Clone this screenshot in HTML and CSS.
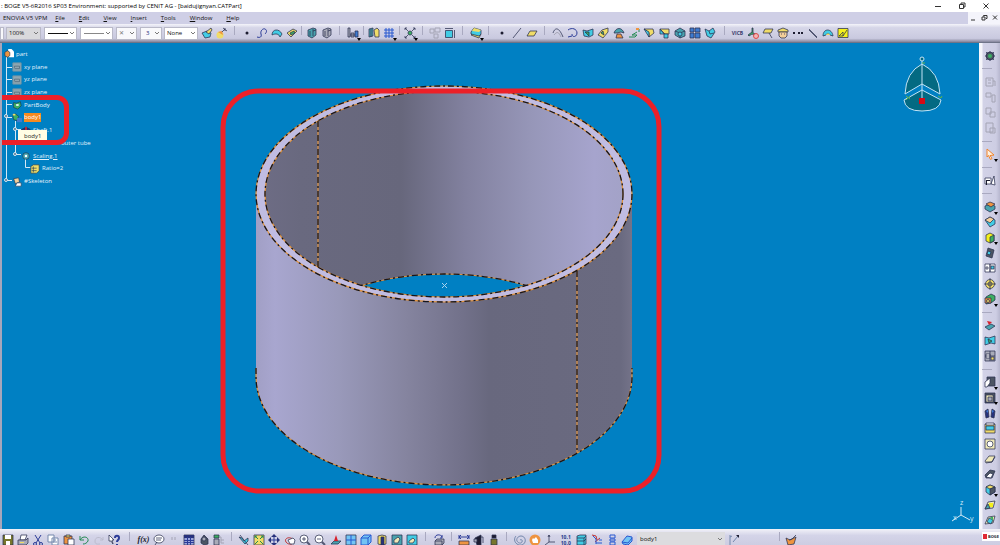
FILE: index.html
```html
<!DOCTYPE html>
<html lang="en">
<head>
<meta charset="utf-8">
<title>BOGE V5-6R2016</title>
<link rel="stylesheet" href="styles.css">
</head>
<body>
<div class="app">
<header class="titlebar">
  <span class="title">: BOGE V5-6R2016 SP03 Environment: supported by CENIT AG - [baidujignyan.CATPart]</span>
  <div class="winbtns">
    <button aria-label="Minimize"><svg viewBox="0 0 12 12"><path d="M3 6.5h6"/></svg></button>
    <button aria-label="Restore"><svg viewBox="0 0 12 12"><path d="M3.5 4.5h4v4h-4zM5 4V3h4v4H8"/></svg></button>
    <button aria-label="Close"><svg viewBox="0 0 12 12"><path d="M3.500 3.500l5 5m0-5l-5 5"/></svg></button>
  </div>
</header>
<nav class="menubar">
  <button class="first">ENOVIA V5 VPM</button><button><u>F</u>ile</button><button><u>E</u>dit</button><button><u>V</u>iew</button><button><u>I</u>nsert</button><button><u>T</u>ools</button><button><u>W</u>indow</button><button><u>H</u>elp</button>
  <div class="docbtns">
    <button aria-label="Minimize document"><svg viewBox="0 0 10 10"><path d="M3 7.500h4"/></svg></button>
    <button aria-label="Restore document"><svg viewBox="0 0 10 10"><path d="M3 4.500h3v3H3zM4.500 4V3H8v3H7"/></svg></button>
    <button aria-label="Close document"><svg viewBox="0 0 10 10"><path d="M3 3l4 4m0-4L3 7"/></svg></button>
  </div>
</nav>

<div class="toolbar top">
  <select class="s-cut" aria-label="Color"><option></option></select>
  <select class="s-zoom" aria-label="Opacity"><option>100%</option></select>
  <select class="s-thick" aria-label="Line weight"><option></option></select>
  <select class="s-thin" aria-label="Line type"><option></option></select>
  <select class="s-point" aria-label="Point symbol"><option>✕</option></select>
  <select class="s-render" aria-label="Rendering"><option>3</option></select>
  <select class="s-layer" aria-label="Layer"><option>None</option></select>
  <div class="group">
    <button aria-label="Painter"><svg viewBox="0 0 12 12"><path class="c" d="M1 6l5-2 4 2-1 4-5 1z"/><path class="y" d="M5 5l5-4 1 2-3 4z"/></svg></button>
    <button aria-label="Wizard"><svg viewBox="0 0 12 12"><circle class="y n" cx="4" cy="8" r="3.500"/><path class="o n" d="M2 5l4-1 1 4z"/><path d="M6 5l3-3M7 1l4 3M9 1v3"/></svg></button>
  </div>
  <i class="sep s10"></i>
  <div class="group">
    <button aria-label="Point"><svg viewBox="0 0 12 12"><circle class="k n" cx="6" cy="6" r="1.500"/></svg></button>
    <button aria-label="Curve"><svg viewBox="0 0 12 12"><path class="navy" d="M1 10c3 1 5 0 4-3S7 1 9 2s2 3 0 5"/></svg></button>
    <button aria-label="Surface"><svg viewBox="0 0 12 12"><path class="c" d="M1 8C1 2 8 1 11 7L9 10C8 7 5 6 1 8z"/></svg></button>
    <button aria-label="Plane"><svg viewBox="0 0 12 12"><path class="y" d="M1 6l6-4 4 2-6 6z"/><path class="g" d="M4 6l4-2 1 2-4 2z"/></svg></button>
  </div>
  <i class="sep s5"></i>
  <div class="group">
    <button aria-label="Catalog"><svg viewBox="0 0 12 12"><path class="t" d="M2 3l5-2 3 1v6l-4 3-4-2z"/><path d="M4 4v5M7 2v7M7 4l3-1"/></svg></button>
    <button aria-label="Shell"><svg viewBox="0 0 12 12"><path class="gr" d="M2 3l5-2 3 1v6l-4 3-4-2z"/><path d="M4 4v5M7 2v7M7 4l3-1"/></svg></button>
  </div>
  <i class="sep s11"></i>
  <div class="group"><button class="more" aria-label="Align"><svg viewBox="0 0 12 12"><path class="gr" d="M1 1h2v9H1zM4 6h3v4H4z"/><path class="b" d="M8 4h3v6H8z"/><path d="M3 8h5"/></svg></button></div>
  <i class="sep s6"></i>
  <div class="group">
    <button aria-label="Compare"><svg viewBox="0 0 12 12"><path class="t" d="M1 2l4-1v8l-4 1z"/><path class="y" d="M6 3l3-2 2 2v7H7z"/><path d="M3 2v8"/></svg></button>
    <button class="more" aria-label="Grid"><svg viewBox="0 0 12 12"><path class="blue" d="M3 1v10M6 1v10M9 1v10M1 3h10M1 6h10M1 9h10"/></svg></button>
  </div>
  <i class="sep s6"></i>
  <div class="group"><button class="more" aria-label="Center"><svg viewBox="0 0 12 12"><path d="M1 1l3 3M11 1L8 4M1 11l3-3M11 11L8 8M1 3V1h2M9 1h2v2M1 9v2h2M9 11h2V9"/><circle class="g" cx="6" cy="6" r="2"/></svg></button></div>
  <i class="sep s10"></i>
  <div class="group">
    <button disabled aria-label="Grouping"><svg viewBox="0 0 12 12"><path class="dim" d="M1 2h4v4H1zM6 1h5v4H6zM5 7h4v4H5z"/></svg></button>
    <button aria-label="Box"><svg viewBox="0 0 12 12"><path class="c" d="M1.500 3.500h7v7h-7z"/><path d="M1 1.500h8M10.500 3v8"/></svg></button>
  </div>
  <i class="sep s11"></i>
  <div class="group"><button class="more" aria-label="Layers"><svg viewBox="0 0 12 12"><path class="y" d="M1 8l3-3 7 2-2 4z"/><path class="c" d="M1 5l3-4 7 2v4l-2 2-8-2z"/><path class="y n" d="M2 4l2-3 7 2-2 2z"/></svg></button></div>
  <i class="sep s11"></i>
  <div class="group">
    <button aria-label="Vertex"><svg viewBox="0 0 12 12"><circle class="k n" cx="6" cy="6" r="1.500"/></svg></button>
    <button aria-label="Line"><svg viewBox="0 0 12 12"><path d="M2 11l8-10"/></svg></button>
    <button aria-label="Reference plane"><svg viewBox="0 0 12 12"><path class="y" d="M1 9l3-5h7L8 9z"/></svg></button>
  </div>
  <i class="sep s11"></i>
  <div class="group wide">
    <button aria-label="Projection"><svg viewBox="0 0 12 12"><path d="M1 6c2-6 6-6 10 4"/><path class="dim" d="M2 8c3-4 5-3 7 2"/></svg></button>
    <button aria-label="Spiral"><svg viewBox="0 0 12 12"><path class="navy" d="M1 3c4-3 9-1 9 3s-5 5-5 1M1 10l4-1"/></svg></button>
    <button aria-label="Extrude"><svg viewBox="0 0 12 12"><path class="c" d="M1 3l4 1 6-2v6l-4 2-5-1z"/><path class="g" d="M3 5h4v4z"/></svg></button>
    <button aria-label="Sweep"><svg viewBox="0 0 12 12"><path class="y" d="M1 8l4-5 6-2v4L6 11 3 9z"/><path class="g" d="M4 6l2-2 1 4z"/></svg></button>
    <button aria-label="Offset"><svg viewBox="0 0 12 12"><path class="t" d="M1 6c2-6 8-6 10 0L8 5 4 6z"/><path class="o" d="M4 7h4l2 4H3z"/></svg></button>
    <button aria-label="Split"><svg viewBox="0 0 12 12"><path class="gl" d="M1 10h6l2-2H4l5-3M8 2h3v3"/><path class="o n" d="M8 1h3v2H8z"/></svg></button>
    <button aria-label="Fillet"><svg viewBox="0 0 12 12"><path class="y" d="M1 2h9l1 4-5 4V6z"/><path class="c" d="M1 2l5 3v5z"/></svg></button>
    <button aria-label="Trim"><svg viewBox="0 0 12 12"><path class="y" d="M1 2h9v5H6z"/><path class="c" d="M5 7h4v4H5zM1 2l4 5H1z"/></svg></button>
    <button aria-label="Solid"><svg viewBox="0 0 12 12"><path class="t" d="M1 4l5-3 5 3v5l-5 2-5-3z"/><path d="M1 4l5 2 5-2M6 6v5"/><circle class="c" cx="6" cy="7" r="2"/></svg></button>
    <button aria-label="Pattern"><svg viewBox="0 0 12 12"><path class="b" d="M1 1h4v4H1zM6 1h5v4H6zM1 6h4v5H1zM6 6h5v5H6z"/></svg></button>
    <button aria-label="Join"><svg viewBox="0 0 12 12"><path class="c" d="M1 2l4 2 4-3 2 4-4 6-4-2z"/><path d="M5 4l1 3 4-1"/></svg></button>
  </div>
  <i class="sep s12"></i>
  <div class="group">
    <button class="vicb">VICB</button>
    <button aria-label="Axis off"><svg viewBox="0 0 12 12"><path class="g" d="M5 1h1v5l5 2-2 1-4-2-3 2-1-1 4-3z"/><circle class="pk" cx="9" cy="9" r="2.500"/></svg></button>
    <button aria-label="Tag"><svg viewBox="0 0 12 12"><path class="y" d="M3 2h8L9 6H1z"/><path d="M7 6l3 5"/></svg></button>
    <button aria-label="Helper"><svg viewBox="0 0 12 12"><path class="y" d="M1 3l5-2 5 2v2H1z"/><path class="sk" d="M2 5h8v4l-2 2H4L2 9z"/><path d="M4 7h1M7 7h1"/></svg></button>
    <button aria-label="Points"><svg viewBox="0 0 12 12"><path class="k n" d="M1 5h2v2H1zM6 5h2v2H6zM9 5h2v2H9z"/></svg></button>
    <button aria-label="Segment"><svg viewBox="0 0 12 12"><path d="M2 2l8 8"/><path d="M2 3l8 8"/></svg></button>
    <button aria-label="Arc surface"><svg viewBox="0 0 12 12"><path class="c" d="M1 9C1 1 10 1 11 9L8 8C7 6 5 6 4 8z"/><path class="y n" d="M4 8c1-2 3-2 4 0z"/></svg></button>
    <button aria-label="Sketch"><svg viewBox="0 0 12 12"><path class="yy" d="M1 1.500h10v9H1z"/><path d="M2 9l4-4v4H2M6 9l4-6"/></svg></button>
  </div>
</div>

<div class="work">
  <main class="viewport">
    <svg class="scene" viewBox="2 43 977 486" preserveAspectRatio="xMinYMin meet">
      <defs>
        <linearGradient id="outer"><stop offset="0" stop-color="#a19fc5"/><stop offset=".05" stop-color="#a8a6cf"/><stop offset=".22" stop-color="#9999ba"/><stop offset=".4" stop-color="#85849f"/><stop offset=".55" stop-color="#72718a"/><stop offset=".62" stop-color="#68687e"/><stop offset=".97" stop-color="#6a6a80"/><stop offset="1" stop-color="#747389"/></linearGradient>
        <linearGradient id="inner"><stop offset="0" stop-color="#6d6c84"/><stop offset=".1" stop-color="#69697f"/><stop offset=".38" stop-color="#67677c"/><stop offset=".56" stop-color="#82819f"/><stop offset=".75" stop-color="#9797b9"/><stop offset=".92" stop-color="#a6a4cd"/><stop offset="1" stop-color="#a3a2c7"/></linearGradient>
        <clipPath id="bore"><ellipse cx="444" cy="194" rx="179" ry="103"/></clipPath>
      </defs>
      <path fill="url(#outer)" d="M256 194v183a188 108 0 0 0 376 0V194z"/>
      <ellipse cx="444" cy="194" rx="188" ry="108" fill="#c0bce2"/>
      <ellipse cx="444" cy="194" rx="179" ry="103" fill="url(#inner)"/>
      <ellipse cx="444" cy="377" rx="179" ry="103" fill="#0080c3" clip-path="url(#bore)"/>
      <g class="edge under"><ellipse cx="444" cy="194" rx="188" ry="108"/><ellipse cx="444" cy="194" rx="179" ry="103"/><ellipse cx="444" cy="377" rx="179" ry="103" clip-path="url(#bore)"/><path d="M256 368v9a188 108 0 0 0 376 0v-9M318 121v147M577 271v182"/></g>
      <g class="edge"><ellipse cx="444" cy="194" rx="188" ry="108"/><ellipse cx="444" cy="194" rx="179" ry="103"/><ellipse cx="444" cy="377" rx="179" ry="103" clip-path="url(#bore)"/><path d="M256 368v9a188 108 0 0 0 376 0v-9M318 121v147M577 271v182"/></g>
      <path d="M442 283l5 5m0-5l-5 5" stroke="#a9d2ee" fill="none"/>
      <rect class="mark" x="223" y="91" width="436" height="400" rx="36"/>
      <g class="compass"><path d="M922 64Q906 72 905 94L922 84 940 94Q939 72 922 64z"/><path d="M922 90L904 100Q905 111 922 111 940 111 941 100z"/><path d="M922 61v41"/><circle cx="922" cy="59" r="2"/></g>
      <path d="M919 98h6v6h-6z" fill="#d60b16"/><path d="M906 96l4 3M910 96l-4 4M938 96l3 2 1-2M922 63h3" stroke="#5fb24c" fill="none"/>
      <path d="M961 507v8l-9 6M961 515l9 5" stroke="#d5ebf8" fill="none"/>
      <g class="axis"><text x="960" y="505">z</text><text x="953" y="520">x</text><text x="970" y="521">y</text></g>
    </svg>

    <div class="tree">
      <svg class="lines" viewBox="0 0 110 150" aria-hidden="true"><path d="M4.500 14v124M5 24.500h5M5 36.500h5M5 49.500h5M5 61.500h5M5 74.500h5M5 137.500h5M13.500 78v33M14 86.500h5M14 111.500h5M23.500 116v8.500h5"/><circle cx="4" cy="73" r="1.500"/><circle cx="13" cy="86" r="1.500"/><circle cx="13" cy="111" r="1.500"/><circle cx="4" cy="137" r="1.500"/></svg>
      <ul>
        <li class="l0"><svg viewBox="0 0 12 12"><path class="w n" d="M5 0h4l3 3v7H5z"/><path class="o" d="M1 4l3-2 3 2v4L4 10 1 8z"/></svg>part</li>
        <li class="l1"><svg viewBox="0 0 12 12"><path class="pl" d="M1 1h10v10H1z"/><path class="pd" d="M3 7V5h6v3H3"/></svg>xy plane</li>
        <li class="l1"><svg viewBox="0 0 12 12"><path class="pl" d="M1 1h10v10H1z"/><path class="pd" d="M3 7V5h6v3H3"/></svg>yz plane</li>
        <li class="l1"><svg viewBox="0 0 12 12"><path class="pl" d="M1 1h10v10H1z"/><path class="pd" d="M3 7V5h6v3H3"/></svg>zx plane</li>
        <li class="l1"><svg viewBox="0 0 12 12"><path class="g" d="M2 3l3 1 5-2 1 5-4 4-5-2z"/><path class="w n" d="M5 5h3v2H5z"/></svg>PartBody</li>
        <li class="l1"><svg viewBox="0 0 12 12"><path class="g" d="M1 3l3-2 4 3-2 5-4-1z"/><path class="b n" d="M6 6h6v5H6z"/><path class="y n" d="M1 1h3v2H1z"/></svg><span class="sel">body1</span></li>
        <li class="l2"><svg viewBox="0 0 12 12"><path class="navyf" d="M1 4l4-2v8l-4 1zM7 2l4 2v7l-4-1z"/><path class="r n" d="M5 1h2v9H5z"/></svg>Shaft.1</li>
        <li class="l4">outer tube</li>
        <li class="l2"><svg viewBox="0 0 12 12"><circle class="t" cx="6" cy="6" r="4"/><circle class="w n" cx="6" cy="6" r="1.500"/></svg><u>Scaling.1</u></li>
        <li class="l3"><svg viewBox="0 0 12 12"><path class="y" d="M1 3l3-2h7v7l-3 3H1z"/><path d="M4 3v7M2 5h6M2 8h6"/></svg>Ratio=2</li>
        <li class="l1"><svg viewBox="0 0 12 12"><path class="sk" d="M2 2l6-1 1 5-5 2z"/><path class="w" d="M6 7h5v4H4z"/></svg>#Skeleton</li>
      </ul>
      <div class="tip" role="tooltip">body1</div>
      <div class="ring"></div>
    </div>
  </main>

  <aside class="side">
    <button aria-label="Workbench"><svg viewBox="0 0 12 12"><circle class="dk" cx="6" cy="6" r="4"/><circle class="g n" cx="6" cy="6" r="2"/><path d="M6 1v2M6 9v2M1 6h2M9 6h2M2 2l2 2M8 8l2 2M10 2L8 4M4 8l-2 2"/></svg></button>
    <i></i>
    <button disabled aria-label="Insert 1"><svg viewBox="0 0 12 12"><path class="dim" d="M2 2h7v8H2zM9 5h2v5M4 4h3M4 7h3"/></svg></button>
    <button disabled aria-label="Insert 2"><svg viewBox="0 0 12 12"><path class="dim" d="M2 2h5v4H2zM8 4h3v7H8z"/></svg></button>
    <button disabled aria-label="Insert 3"><svg viewBox="0 0 12 12"><path class="dim" d="M2 1h5v6H2zM6 5h5v5H6z"/></svg></button>
    <button disabled aria-label="Insert 4"><svg viewBox="0 0 12 12"><path class="dim" d="M2 1h7v9H2zM6 6h5v5H6z"/></svg></button>
    <i></i>
    <button class="more" aria-label="Select"><svg viewBox="0 0 12 12"><path class="arrow" d="M3 1l7 6-4 .5 2 3-1.500 1-2-4L3 9z"/></svg></button>
    <i></i>
    <button aria-label="Sketcher"><svg viewBox="0 0 12 12"><path class="w" d="M1 3h6v6H1zM7 9l3-8 1 9z"/><path class="k n" d="M2 5h4v1H3v4H2z"/></svg></button>
    <i></i>
    <button class="more" aria-label="Pad"><svg viewBox="0 0 12 12"><path class="t" d="M1 5l5-2 5 2v3l-5 3-5-3z"/><path class="o" d="M2 3l4-2 5 2-4 3z"/></svg></button>
    <button aria-label="Pocket"><svg viewBox="0 0 12 12"><path class="c" d="M1 4l5-3 5 3v4l-5 3z"/><path class="sk" d="M1 4l5-3 4 2-4 4z"/></svg></button>
    <button class="more" aria-label="Block"><svg viewBox="0 0 12 12"><path class="yy" d="M2 3l4-2 4 2v6l-4 2-4-2z"/><path class="g" d="M6 5l4-2v6l-4 2z"/></svg></button>
    <button aria-label="Groove"><svg viewBox="0 0 12 12"><path class="dk" d="M4 1l6 2-2 8-6-2z"/><path class="c" d="M4 4l3 1-1 3-3-1z"/></svg></button>
    <button aria-label="Mirror"><svg viewBox="0 0 12 12"><path class="w" d="M1 2h5v8H1zM6 2h5v8H6z"/><path class="c" d="M7 4h3v3H7z"/><path d="M3 4v4M1 6h4"/></svg></button>
    <button aria-label="Hole"><svg viewBox="0 0 12 12"><circle class="y" cx="6" cy="6" r="4.500"/><path d="M6 0v12M0 6h12"/><circle cx="6" cy="6" r="2"/></svg></button>
    <button class="more" aria-label="Boolean"><svg viewBox="0 0 12 12"><path class="g" d="M2 4l5-3 4 2v4l-4 3-5 1z"/><path class="o" d="M1 5h6v5H1z"/><circle class="y" cx="4" cy="8" r="1.500"/></svg></button>
    <i></i>
    <button aria-label="Thickness"><svg viewBox="0 0 12 12"><path class="t" d="M1 8l6-3 4 2-6 4z"/><path class="r n" d="M3 2l2 4 3-3z"/></svg></button>
    <button aria-label="Sew"><svg viewBox="0 0 12 12"><path class="c" d="M1 2l4 1 6-2v8l-4-1-6 2z"/><path class="g" d="M4 4l4 2-3 2z"/></svg></button>
    <button aria-label="Constraint"><svg viewBox="0 0 12 12"><path class="gr" d="M1 1h10v10H1z"/><path class="w" d="M2 4h4v4H2z"/><path class="y" d="M7 7h3v3H7z"/><path d="M1 6h10M6 1v10"/></svg></button>
    <i></i>
    <button class="more" aria-label="Draft"><svg viewBox="0 0 12 12"><path class="dk" d="M3 1h8v9H3z"/><path class="w" d="M1 6l5-4v5l-3 4H1z"/></svg></button>
    <button class="more" aria-label="Shell"><svg viewBox="0 0 12 12"><path class="dk" d="M1 1h10v10H1z"/><path class="cream" d="M2 3h7v7H2z"/><path class="gr" d="M4 5h4v4H4z"/></svg></button>
    <button aria-label="Symmetry"><svg viewBox="0 0 12 12"><path class="navyf" d="M1 4l3-2 1 8-3 1zM11 4L8 2 7 10l3 1z"/><path class="b n" d="M2 4l2-1v3zM8 3l2 1-2 2z"/></svg></button>
    <button aria-label="Barrel"><svg viewBox="0 0 12 12"><path class="y" d="M1 2h10v9H1z"/><path class="c" d="M2 4h8v4H2z"/><path class="w" d="M2 1h8v2H2z"/></svg></button>
    <button aria-label="Frame"><svg viewBox="0 0 12 12"><path class="cream" d="M1 1h10v10H1z"/><circle class="w" cx="6" cy="6" r="3"/></svg></button>
    <button aria-label="Add"><svg viewBox="0 0 12 12"><path class="cream" d="M1 8l4-5h6L8 9l-6 1z"/><path d="M2 9h6l3-5"/></svg></button>
    <button aria-label="Remove"><svg viewBox="0 0 12 12"><path class="dk" d="M1 7l5-5 5 1-3 7H2z"/><path class="w" d="M2 9l4-4 3 1-2 4z"/></svg></button>
    <button class="more" aria-label="Assemble"><svg viewBox="0 0 12 12"><path class="c" d="M2 3l4-2 5 2v5l-5 3-4-3z"/><path class="y" d="M2 3l4-2 5 2-5 2z"/><path class="dk" d="M6 5l5-2v5l-5 3z"/></svg></button>
    <button aria-label="Trim body"><svg viewBox="0 0 12 12"><path class="cream" d="M1 10l3-7 7-1-2 7z"/><path class="yy n" d="M5 4h4v4H5z"/><path class="t" d="M1 10l3-5 2 4z"/></svg></button>
    <button aria-label="Lump"><svg viewBox="0 0 12 12"><path class="cream" d="M1 10l3-7 7-1-2 7z"/><path class="c" d="M3 8l2-4 4 2-2 4z"/><path class="g n" d="M6 3h3v4z"/></svg></button>
  </aside>
</div>

<div class="toolbar bottom">
  <div class="group w122">
    <button aria-label="Save"><svg viewBox="0 0 12 12"><path class="olive" d="M1 1h10v10H1z"/><path class="w n" d="M3 1h6v4H3zM4 7h4v4H4z"/></svg></button>
    <button aria-label="Print"><svg viewBox="0 0 12 12"><path class="w" d="M4 1h6L8 6H3z"/><path class="gr" d="M1 6h8l2-2v5l-2 2H1z"/><path class="y n" d="M3 8h4v1H3z"/></svg></button>
    <button aria-label="Cut"><svg viewBox="0 0 12 12"><path class="navy" d="M3 1l5 8M9 1L4 9"/><circle class="navy" cx="3" cy="10" r="1.500"/><circle class="navy" cx="9" cy="10" r="1.500"/></svg></button>
    <button aria-label="Copy"><svg viewBox="0 0 12 12"><path class="w lt" d="M1 1h6v7H1zM5 4h6v7H5z"/><path class="lt" d="M6 6h3M6 8h4"/></svg></button>
    <button aria-label="Paste"><svg viewBox="0 0 12 12"><path class="o" d="M1 2h8v8H1z"/><path class="w" d="M5 5h6v6H5z"/><path class="y" d="M3 1h4v2H3z"/></svg></button>
    <button aria-label="Undo"><svg viewBox="0 0 12 12"><path class="gl" d="M2 2v4h4M2 6c3-5 9-3 8 1-1 2-3 3-5 3"/></svg></button>
    <button disabled aria-label="Redo"><svg viewBox="0 0 12 12"><path class="fade" d="M10 3v3H7M10 6C7 2 2 3 2 7s3 3 5 3"/></svg></button>
    <button aria-label="What is this"><svg viewBox="0 0 12 12"><path class="w" d="M1 1l5 5H4l1 4-2-3H1z"/><path class="navy thick" d="M7 4c0-3 4-3 4 0 0 2-2 2-2 4M9 10v1"/></svg></button>
  </div>
  <i class="sep s14"></i>
  <div class="group">
    <button class="fx">f(x)</button>
    <button aria-label="Comment"><svg viewBox="0 0 12 12"><ellipse class="w" cx="6" cy="5" rx="5" ry="4"/><path d="M4 8l-2 3M3 4h6M3 6h5"/></svg></button>
    <button disabled aria-label="Quote"><svg viewBox="0 0 12 12"><path class="dim" d="M4 3v3M7 3v3"/></svg></button>
    <button aria-label="Design table"><svg viewBox="0 0 12 12"><path class="lav" d="M1 1h10v10H1z"/><path class="navyf n" d="M1 1h10v3H1z"/><path class="navy" d="M1 6.500h10M1 8.500h10M4.500 3v8M7.500 3v8"/></svg></button>
    <button aria-label="Lock"><svg viewBox="0 0 12 12"><path class="dk" d="M3 5l3-4 4 4v5l-4 1-3-2z"/><circle class="gr" cx="6" cy="5" r="2"/></svg></button>
    <button aria-label="Structure"><svg viewBox="0 0 12 12"><path class="g" d="M1 1h5v3H1z"/><path class="gr" d="M1 5h5v6H1z"/><path class="dim" d="M6 3h2v6h3M8 6h3"/></svg></button>
  </div>
  <i class="sep s10"></i>
  <div class="group w184">
    <button aria-label="Fly"><svg viewBox="0 0 12 12"><path class="c" d="M1 3l3 1 2 3 4-3v3l-3 3z"/><path d="M2 1l8 10"/></svg></button>
    <button aria-label="Fit all"><svg viewBox="0 0 12 12"><path class="y" d="M1 1h10v10H1z"/><path class="gl" d="M2 2l3 3M10 2L7 5M2 10l3-3M10 10L7 7M2 4V2h2M8 2h2v2"/></svg></button>
    <button aria-label="Pan"><svg viewBox="0 0 12 12"><path class="navy" d="M6 1v10M1 6h10"/><path class="navyf n" d="M3 3l3-3 3 3zM3 9l3 3 3-3zM3 3L0 6l3 3zM9 3l3 3-3 3z"/></svg></button>
    <button aria-label="Rotate"><svg viewBox="0 0 12 12"><path class="rl" d="M9 5C4 2 0 5 2 8s6 2 6 2"/><path class="w" d="M4 6l5-2 2 2-1 4H6z"/></svg></button>
    <button aria-label="Zoom in"><svg viewBox="0 0 12 12"><circle class="w" cx="5" cy="5" r="4"/><path d="M3 5h4M5 3v4"/><path class="thick" d="M8 8l3 3"/></svg></button>
    <button aria-label="Zoom out"><svg viewBox="0 0 12 12"><circle class="w" cx="5" cy="5" r="4"/><path d="M3 5h4"/><path class="thick" d="M8 8l3 3"/></svg></button>
    <button aria-label="Normal view"><svg viewBox="0 0 12 12"><path class="t" d="M1 10l3-3h7l-3 3z"/><path class="r n" d="M4 7l2-6 2 6z"/></svg></button>
    <button aria-label="Multi view"><svg viewBox="0 0 12 12"><path class="sky" d="M1 1h10v10H1z"/><path class="blue" d="M6 1v10M1 6h10"/></svg></button>
    <button aria-label="Isometric"><svg viewBox="0 0 12 12"><path class="sky blue" d="M1 4l3-3h7v7l-3 3H1z"/><path class="blue" d="M1 4h7v7M8 4l3-3"/></svg></button>
    <button aria-label="Shading"><svg viewBox="0 0 12 12"><path class="y" d="M2 2l4-1 4 1v8l-4 1-4-1z"/><path class="navyf" d="M5 3h3v8H5z"/></svg></button>
    <button aria-label="Hide"><svg viewBox="0 0 12 12"><path class="t" d="M1 1h10v10H1z"/><path class="cream" d="M3 6l4-3 2 2-2 4H3z"/></svg></button>
    <button aria-label="Swap space"><svg viewBox="0 0 12 12"><path class="c" d="M1 1h10v10H1z"/><path class="cream" d="M3 7l4-3 2 2-2 3H3z"/></svg></button>
  </div>
  <i class="sep s11"></i>
  <div class="group"><button aria-label="Update"><svg viewBox="0 0 12 12"><path class="gr" d="M2 7h7v4H2zM2 7l2-2h7v4l-2 2"/><path class="navy" d="M2 4c0-4 6-4 7-1M9 1v3H7"/></svg></button></div>
  <i class="sep s10"></i>
  <div class="group">
    <button aria-label="Measure between"><svg viewBox="0 0 12 12"><path class="navy" d="M1 1v4M11 1v4M1 3h10M3 1L1 3l2 2M9 1l2 2-2 2"/><path class="o" d="M1 7h10v4H1z"/></svg></button>
    <button aria-label="Measure item"><svg viewBox="0 0 12 12"><path class="k" d="M2 4l6-3v10H4z"/><path class="gr" d="M1 5h3v3H1z"/><path d="M8 3h2v6"/></svg></button>
    <button aria-label="Inertia"><svg viewBox="0 0 12 12"><path class="olive" d="M3 5h6v6H3z"/><path class="k" d="M4 1h4v3H4z"/></svg></button>
  </div>
  <i class="sep s11"></i>
  <div class="group w123">
    <button aria-label="Material"><svg viewBox="0 0 12 12"><path class="lt" d="M6 6c1-1 3 0 2 2S4 9 3 7s1-5 4-5 5 3 4 6-5 4-8 2-3-6-1-8"/></svg></button>
    <button aria-label="Apply"><svg viewBox="0 0 12 12"><circle class="o n" cx="6" cy="6" r="5.500"/><path class="w n" d="M3 6l1-2 1 1 2-2 2 3v3H4z"/></svg></button>
    <button aria-label="Axis system"><svg viewBox="0 0 12 12"><path d="M5 1v7h6M5 8l-4 3M4 3l1-2 1 2"/></svg></button>
    <button class="num"><span>10.1</span><span>10.0</span></button>
    <button aria-label="Stack"><svg viewBox="0 0 12 12"><path class="c" d="M2 2l3-1h6v9l-2 1H2z"/><path d="M2 4h7l2-2M2 7h7l2-2M9 4v7"/></svg></button>
    <button aria-label="Relations"><svg viewBox="0 0 12 12"><path class="rl" d="M1 1l4 1 1 4M4 8l5-4"/><path class="blue" d="M2 2l3 3v5M5 9h6M8 6h3"/></svg></button>
    <button aria-label="List"><svg viewBox="0 0 12 12"><path class="blue" d="M4 1h5v3H4zM4 5h5v2H4zM4 8h5v3H4z"/></svg></button>
    <button aria-label="Current body"><svg viewBox="0 0 12 12"><path class="sky blue" d="M1 8l5-6 5 1v4l-4 4-5-1z"/><path class="blue" d="M1 8l6 1 4-5"/></svg></button>
  </div>
  <select class="s-body" aria-label="In work object"><option>body1</option></select>
  <div class="group"><button aria-label="Link"><svg viewBox="0 0 12 12"><path class="lt" d="M2 1v10M4 2l-2 1M5 8l5-6"/><path class="k n" d="M8 1h3v3z"/></svg></button></div>
  <i class="sep far"></i>
  <div class="group"><button aria-label="Open box"><svg viewBox="0 0 12 12"><path class="o" d="M1 4l4 2 6-3-2 7-6 1z"/><path d="M4 6l3-1 4-4"/></svg></button></div>
  <div class="logo"><b></b>BOGE</div>
</div>
</div>
</body>
</html>
```
FILE: styles.css
```css
* { box-sizing: border-box; }
body { margin: 0; overflow: hidden; font-family: "Open Sans", "Noto Sans", sans-serif; font-size: 6px; color: #1c1c2c; }
button { position: relative; border: 0; padding: 0; background: none; font: inherit; color: inherit; }
.app { display: flex; flex-direction: column; height: 100vh; }

/* window chrome */
.titlebar { display: flex; flex: none; height: 12px; background: #fff; justify-content: space-between; line-height: 12px; }
.title { padding-left: 1px; color: #000; white-space: nowrap; }
.winbtns { display: flex; gap: 12px; padding-right: 8px; }
.winbtns button, .winbtns svg { display: block; width: 12px; height: 12px; }
.winbtns svg, .docbtns svg { fill: none; stroke: #333; stroke-width: 1; }
.menubar { display: flex; flex: none; height: 12px; gap: 14px; background: #cfcfe6; line-height: 11px; color: #111; }
.menubar .first { margin: 0 -6px 0 3px; }
.docbtns { display: flex; margin-left: auto; background: #f4f4fb; gap: 1px; }
.docbtns button, .docbtns svg { display: block; width: 10px; height: 11px; }

/* toolbars */
.toolbar { display: flex; flex: none; overflow: hidden; }
.top { height: 19px; align-items: center; background: linear-gradient(#f4f4fa, #d6d6e8 20%, #c9c9df 80%, #85859b); border-bottom: 1px solid #6f7488; }
.bottom { height: 16px; padding-top: 3px; background: linear-gradient(#f2f2f8, #d4d4e8 40%, #cdcde2); }
.group { display: flex; flex: none; }
.wide { width: 168px; justify-content: space-between; }
.w122 { width: 122px; justify-content: space-between; }
.w123 { width: 123px; justify-content: space-between; }
.w184 { width: 184px; justify-content: space-between; }
.toolbar button { display: grid; place-items: center; width: 15px; height: 15px; flex: none; }
.sep { flex: none; height: 14px; background: linear-gradient(90deg, #a9a9c0, #a9a9c0) 50% 0 / 1px 9px no-repeat; }
.s5 { width: 5px; } .s6 { width: 6px; } .s10 { width: 10px; } .s11 { width: 11px; } .s12 { width: 12px; } .s14 { width: 14px; }
.far { width: 8px; margin-left: 34px; }
.more::after { content: ""; position: absolute; right: -1px; bottom: 0; border: 2px solid transparent; border-top: 3px solid #000; border-bottom: 0; }
.toolbar .vicb { font-weight: 700; font-size: 5px; color: #39396b; }
.toolbar .fx { font: italic 700 8px "Liberation Serif", serif; }
.bottom .num { font-size: 5px; line-height: 6px; font-weight: 700; color: #223a8a; align-content: center; }

/* drop-downs */
select { appearance: none; flex: none; height: 13px; margin: 0 3px 0 0; padding: 0 0 0 2px; border: 1px solid #b9b9c8; border-radius: 0; font: inherit; color: #111;
  background: url("data:image/svg+xml,%3Csvg xmlns='http://www.w3.org/2000/svg' width='6' height='4'%3E%3Cpath d='M1 1l2 2 2-2' fill='none' stroke='%23777'/%3E%3C/svg%3E") right 1px center no-repeat, #f8f8fb; }
.s-cut { width: 4px; padding: 0; margin-right: 2px; }
.s-zoom { width: 35px; background-color: #d9d9dc; }
.s-thick, .s-thin { width: 33px; }
.s-thick { background: linear-gradient(#111, #111) 3px 5px / 20px 1px no-repeat, url("data:image/svg+xml,%3Csvg xmlns='http://www.w3.org/2000/svg' width='6' height='4'%3E%3Cpath d='M1 1l2 2 2-2' fill='none' stroke='%23777'/%3E%3C/svg%3E") right 1px center no-repeat, #fff; }
.s-thin { background: linear-gradient(#888, #888) 3px 5px / 20px 1px no-repeat, url("data:image/svg+xml,%3Csvg xmlns='http://www.w3.org/2000/svg' width='6' height='4'%3E%3Cpath d='M1 1l2 2 2-2' fill='none' stroke='%23777'/%3E%3C/svg%3E") right 1px center no-repeat, #fff; }
.s-point { width: 21px; color: #777; }
.s-render { width: 22px; margin-right: 2px; padding-left: 5px; color: #24247a; }
.s-layer { width: 34px; margin-right: 1px; background-color: #fff; }
.s-body { width: 88px; margin: 0 1px 0 2px; background-color: #dcdcdf; border-color: #dcdcdf; }

/* icon paints */
button svg { display: block; fill: none; stroke: #2b3150c0; stroke-width: 1; }
.group svg, .side svg { width: 12px; height: 12px; }
.tree li svg { width: 10px; height: 10px; flex: none; fill: none; stroke: #1b3350c0; }
.c { fill: #42cce4; } .t { fill: #4aa3ae; } .y { fill: #f0dc68; } .yy { fill: #f4f01c; } .g { fill: #3cae62; } .w { fill: #fff; }
.o { fill: #ee9440; } .b { fill: #3e7ad0; } .k { fill: #1c1c30; } .gr { fill: #a9abb8; } .dk { fill: #4c5563; }
.sk { fill: #f3cf9a; } .r { fill: #d8222c; } .cream { fill: #efe9b8; } .sky { fill: #72c4f4; } .olive { fill: #77762c; }
.navyf { fill: #28327c; } .lav { fill: #9aa4dc; } .pk { fill: #f4b4b4; stroke: #dd4a4a; } .n { stroke: none; }
.navy { stroke: #2c3c98; } .blue { stroke: #2858d0; } .gl { stroke: #248a52; } .rl { stroke: #c03434; } .lt { stroke: #7488ac; }
.dim { stroke: #a4a4b4; } .fade { stroke: #bcbccd; } .thick { stroke-width: 2; }
.arrow { fill: #fff0de; stroke: #f0842c; }
.pl { fill: #8fa6b0; stroke: #6f91a3; } .pd { stroke: #566e80; }

/* work area */
.work { display: flex; flex: 1; min-height: 0; }
.viewport { position: relative; flex: 1; background: #0080c3; border-left: 2px solid #a6a6bb; overflow: hidden; }
.scene { position: absolute; inset: 0; width: 100%; height: 100%; }
.edge { fill: none; stroke: #15151d; stroke-width: 1.300; stroke-dasharray: 6 3 2 3; }
.under { stroke: #e0923c; stroke-dasharray: none; stroke-width: 1.200; }
.mark { fill: none; stroke: #ec2028; stroke-width: 5; }
.compass { fill: #046a82; stroke: #c3e4f7; stroke-width: 1; }
.axis { fill: #d5ebf8; font-size: 7px; }
.side { display: flex; flex-direction: column; flex: none; width: 21px; padding: 5px 3px 1px 3px; background: linear-gradient(90deg, #f6f6fb 3px, #d2d2e7 4px, #cdcde3 17px, #b7b7cf); }
.side button { display: grid; place-items: center; flex: 1; min-height: 0; }
.side i { flex: none; height: 11px; background: linear-gradient(#a9a9c0, #a9a9c0) 0 5px / 10px 1px no-repeat; }

/* specification tree */
.tree { position: absolute; left: 0; top: 5px; width: 110px; color: #e4f2fb; line-height: 9px; }
.tree ul { display: grid; grid-auto-rows: 1fr; height: 140px; margin: 0; padding: 0; list-style: none; position: relative; }
.tree li { display: flex; align-items: center; gap: 2px; white-space: nowrap; }
.l0 { padding-left: 2px; } .l1 { padding-left: 10px; } .l2 { padding-left: 19px; } .l3 { padding-left: 28px; } .l4 { padding-left: 59px; }
.sel { background: #f58a1f; color: #fff; }
.lines { position: absolute; left: 0; top: -5px; width: 110px; height: 150px; fill: #4d6f8a; stroke: #d3e8f5; }
.lines path { fill: none; }
.tip { position: absolute; left: 16px; top: 82px; width: 29px; height: 12px; padding-left: 6px; line-height: 12px; background: #fffde4; color: #222; }
.ring { position: absolute; left: -20px; top: 47px; width: 87px; height: 50px; border: 5px solid #ec2028; border-radius: 12px; }

.logo { display: flex; align-items: center; gap: 1px; margin-left: auto; height: 9px; padding: 0 1px; background: #fff; font-size: 4px; font-weight: 700; }
.logo b { width: 4px; height: 5px; background: #e02a35; }
```
